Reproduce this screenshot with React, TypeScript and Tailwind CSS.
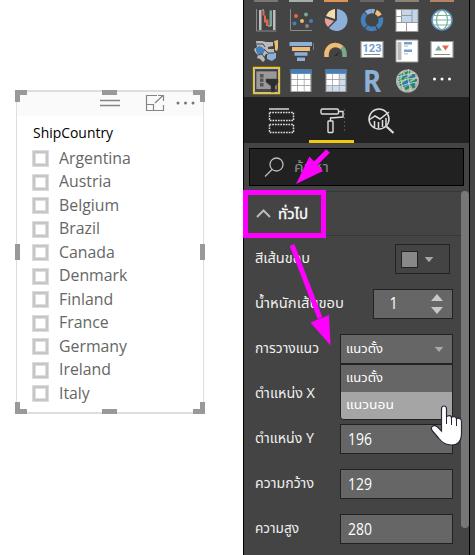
import React from "react";

const thai = "font-['Noto_Sans_Thai','Noto_Sans','Open_Sans',sans-serif]";
const latin = "font-['Open_Sans','Noto_Sans',sans-serif]";

const countries = [
  "Argentina", "Austria", "Belgium", "Brazil", "Canada", "Denmark",
  "Finland", "France", "Germany", "Ireland", "Italy",
];

function Handle({ className }: { className: string }) {
  return <span className={`absolute border-[#999] ${className}`} />;
}

function Slicer() {
  return (
    <section className={`relative ml-4 mt-[90px] h-[324px] w-[188px] shrink-0 border border-t-2 border-b-2 border-[#dedede] bg-white ${latin}`}>
      <header className="flex h-6 items-start bg-[#fafafa] pl-[83px] pt-[2px]">
        <svg width="96" height="20" viewBox="0 0 96 20" fill="none" stroke="#858585">
          <path d="M0 6.500h20M0 11.500h20" strokeWidth="1.300" />
          <path d="M57 1.500H46.500v15h17V11M46.500 10.500h7v6M55 9l8-7.500M58 1.500h5.500V7" strokeWidth="1.200" />
          <g fill="#777" stroke="none"><circle cx="78" cy="9" r="1.500" /><circle cx="85.500" cy="9" r="1.500" /><circle cx="93" cy="9" r="1.500" /></g>
        </svg>
      </header>
      <h2 className="ml-[16px] mt-[6px] h-[25px] w-fit origin-left scale-x-[0.960] text-[14.500px] leading-[22px] text-black">ShipCountry</h2>
      <ul className="ml-[15px]">
        {countries.map((c) => (
          <li key={c} className="flex h-[23.500px] items-center">
            <span className="size-[17px] shrink-0 border border-[#dcdcdc] bg-[#c6c6c6] p-[2px]">
              <span className="block size-full border border-[#dedede] bg-white" />
            </span>
            <span className="-mt-[2px] ml-[10px] origin-left scale-x-[0.960] text-[16.500px] leading-[22px] text-[#666]">{c}</span>
          </li>
        ))}
      </ul>
      <Handle className="-left-[2px] -top-[2px] size-3 border-l-[5px] border-t-[5px]" />
      <Handle className="-right-[2px] -top-[2px] size-3 border-r-[5px] border-t-[5px]" />
      <Handle className="-bottom-[2px] -left-[2px] size-3 border-b-[5px] border-l-[5px]" />
      <Handle className="-bottom-[2px] -right-[2px] size-3 border-b-[5px] border-r-[5px]" />
      <Handle className="-top-[2px] left-[85px] w-[15px] border-t-[5px]" />
      <Handle className="-bottom-[2px] left-[85px] w-[15px] border-t-[5px]" />
      <Handle className="-left-[2px] top-[152px] h-[16px] border-l-[5px]" />
      <Handle className="-right-[2px] top-[152px] h-[16px] border-l-[5px]" />
    </section>
  );
}

function Tile({ children }: { children: React.ReactNode }) {
  return <svg width="24" height="24" viewBox="0 0 24 24" className="shrink-0 overflow-visible">{children}</svg>;
}

function TableTile({ matrix }: { matrix?: boolean }) {
  return (
    <Tile>
      <path d="M1.500 1.500h21v22.500h-21z" fill="#999" />
      <path d="M1.500 1.500h21v4h-21z" fill="#4480bd" />
      {[6, 12, 18].map((y) => [2.5, 9, 15.5].map((x) => (
        <rect key={`${x}-${y}`} x={x} y={y} width="5.800" height="5.200" fill={matrix && (x > 15 || y > 17) ? "#cedded" : "#fff"} />
      )))}
    </Tile>
  );
}

function Visuals() {
  const row = "flex h-6 gap-[11.200px]";
  return (
    <div className="flex h-[98px] flex-col border-b border-[#222] pl-[10px]">
      <div className="flex h-[2px] gap-[11.200px]">
        {["bg-[#777]", "bg-[#a5b1a6]", "bg-[#dc9557]", "bg-[#666]", "bg-[#8b8372]", "bg-[#b28461]"].map((c) => (
          <span key={c} className={`w-6 ${c}`} />
        ))}
      </div>
      <div className={`mt-[6px] ${row}`}>
        <Tile>
          <path d="M2.500 1v22h20" fill="none" stroke="#8a8a8a" />
          <path d="M5 2h2.500v20H5zM19 2h2.500v20H19z" fill="#bdbdbd" />
          <path d="M8.500 2.500h2v5h-2zM10 7.500h2v7h-2zM12 11.500h2.500v6.500H12z" fill="#df6950" />
          <path d="M15.500 2.500H18V18h-2.500z" fill="#78a998" /><path d="M8 2h2M14 18h3" stroke="#bdbdbd" />
        </Tile>
        <Tile>
          <path d="M1.500 1v21.500H23" fill="none" stroke="#8a8a8a" />
          <g><circle cx="7" cy="8" r="2" fill="#df6950" /><circle cx="17" cy="6.500" r="2" fill="#77a98d" /><circle cx="5.500" cy="15.500" r="2" fill="#4480bd" /><circle cx="13" cy="13" r="2" fill="#e7bd74" /><circle cx="22" cy="13" r="2" fill="#4480bd" /><circle cx="18" cy="18" r="2" fill="#858585" /></g>
        </Tile>
        <Tile>
          <path d="M13 12V1a11 11 0 1 1-8 19z" fill="#8db0d8" />
          <path d="M11 11V1A11 11 0 0 0 2 8z" fill="#f2ddaf" /><path d="M10 13 1 10a10.500 10.500 0 0 0 3 9z" fill="#e9a298" />
        </Tile>
        <Tile>
          <g transform="rotate(-90 12 12)" fill="none" strokeWidth="4.500">
            <circle cx="12" cy="12" r="9" stroke="#eebd75" strokeDasharray="5.500 60" strokeDashoffset="-4" />
            <circle cx="12" cy="12" r="9" stroke="#4480bd" strokeDasharray="11 60" strokeDashoffset="-11.500" />
            <circle cx="12" cy="12" r="9" stroke="#4480bd" strokeDasharray="10 60" strokeDashoffset="-24" />
            <circle cx="12" cy="12" r="9" stroke="#4480bd" strokeDasharray="14 60" strokeDashoffset="-35" />
            <circle cx="12" cy="12" r="9" stroke="#8db0d8" strokeDasharray="6 60" strokeDashoffset="-50" />
            <circle cx="12" cy="12" r="9" stroke="#8db0d8" strokeDasharray="2.500 60" />
          </g>
        </Tile>
        <Tile>
          <path d="M.500 1h23v23H.500z" fill="#999" />
          <path d="M1.500 2h4.500v6H1.500zM1.500 9h4.500v5H1.500zM1.500 15h9.500v8H1.500zM12 15h10.500v8H12z" fill="#fff" />
          <path d="M7 2h9.500v5H7zM7 8h9.500v6H7zM17.500 2H22.500v12h-5z" fill="#c1d6eb" />
        </Tile>
        <Tile>
          <circle cx="12" cy="12" r="10" fill="#fff" stroke="#5c91c6" strokeWidth="1.500" />
          <g fill="none" stroke="#7caf9b" strokeWidth="1.200"><ellipse cx="12" cy="12" rx="5.500" ry="9.500" /><path d="M3 7.500h18M2 12h20M3 17h18" /></g>
        </Tile>
      </div>
      <div className={`mt-[6px] ${row}`}>
        <Tile>
          <path d="M2 3h6l4 1h7v4l-5 1v2h6v4l-8 1-2 3 1 3-2 2-3-3-3-1 1-3-3-3-1-3 3-2z" fill="#b9b9b9" />
          <path d="m2 10 3-2 3 1 3 3-2 4H4l-2-3z" fill="#4480bd" />
          <path d="m13 17 4-3 5 1v5l-4 3-5-2z" fill="#8db0d8" />
          <path d="m20 3 4-1v8l-1 3-2-1v-4z" fill="#eebd75" />
          <path d="M3 6h6l2 3M10 11l4 4h6M4 17l4-1 2 3" stroke="#444" fill="none" />
        </Tile>
        <Tile>
          <path d="M.500 4h22.500v4H.500z" fill="#8db0d8" /><path d="M3 9h18v4H3z" fill="#eebd75" />
          <path d="M5.500 14.300h13v3.500h-13zM8 19.500h8V23H8z" fill="#8db0d8" /><path d="M24.500 5v7" stroke="#777" />
        </Tile>
        <Tile>
          <path d="M2.500 19v-3a9 9 0 0 1 9-9c2.500 0 4.500 1 6.500 2.500" fill="none" stroke="#eebd75" strokeWidth="4.500" />
          <path d="M18 9.500c2 2 2.500 4 2.500 6.500v3" fill="none" stroke="#77a98d" strokeWidth="4.500" />
          <path d="m10 18 6-5-3 5z" fill="#292929" />
        </Tile>
        <Tile>
          <path d="M1 3.500h22v16H1z" fill="#fff" stroke="#999" strokeWidth="1.200" />
          <text x="2.500" y="14" textLength="19" lengthAdjust="spacingAndGlyphs" className="font-['Roboto',sans-serif] text-[11px] font-bold" fill="#709dce">123</text>
          <path d="M4 16.500h16" stroke="#888" />
        </Tile>
        <Tile>
          <path d="M1 2h22v22H1z" fill="#fff" stroke="#999" />
          <path d="M2.500 4h4v18h-4z" fill="#b8b8b8" />
          <path d="M9 4h8v2.500H9zM9 11.500h8V14H9z" fill="#75a1ce" /><path d="M9 7.500h4V9H9zM9 15h4v1.500H9z" fill="#ccc" />
        </Tile>
        <Tile>
          <path d="M1 3.500h22v16H1z" fill="#fff" stroke="#999" strokeWidth="1.200" />
          <path d="m5 12.500 3.500-5 3.500 5z" fill="#77a998" /><path d="m12 7.500 3.500 5 3.500-5z" fill="#df6950" /><path d="M4 16.500h16" stroke="#888" />
        </Tile>
      </div>
      <div className={`mt-[6px] ${row}`}>
        <Tile>
          <path d="M-.500-.500h26v26h-26z" fill="#484848" stroke="#f2c811" strokeWidth="1.300" />
          <path d="M.500.500h24v24H.500z" fill="none" stroke="#e8e8e8" strokeWidth=".7" />
          <path d="M2 3h21v18.500H2z" fill="#999" stroke="#333" strokeWidth=".6" />
          <path d="M6 6h3.500v3.500H6zM6 10.500h3.500V14H6zM6 15h3.500v3.500H6z" fill="#555" />
          <path d="M12 11h12v4l-3 3v6h-4v-6l-5-4z" fill="#2d2d2d" stroke="#444" strokeWidth=".6" />
        </Tile>
        <TableTile /><TableTile matrix />
        <Tile><text x="3" y="24" textLength="18" lengthAdjust="spacingAndGlyphs" className="font-['Noto_Sans',sans-serif] text-[31px] font-bold" fill="#8db0d8">R</text></Tile>
        <Tile>
          <circle cx="12.500" cy="13" r="11.500" fill="#b2b2b2" />
          <path d="m4 9 4-3m2 0 5-2m2 3 3 1M4 14l5-4m2 2 7-3m2 3 2 0M5 18l7-4m3 2 6-3M10 21l5-3m2 1 3-1" stroke="#179343" strokeWidth="3" />
          <path d="m8 9 5-2m-4 8 6-3m-8 6 7-3m2-6 4-1m-4 9 4-1" stroke="#227bb8" strokeWidth="2.500" />
          <path d="M2 9c7-1 13-4 18-4M2 14c7-2 13-4 21-4M4 19c6-3 12-4 18-5M7 3c-2 6-1 13 2 20M14 1c-2 7-1 14 2 22" stroke="#dedede" fill="none" strokeWidth=".8" />
        </Tile>
        <Tile><g fill="#fff"><circle cx="4.500" cy="11" r="1.500" /><circle cx="12" cy="11" r="1.500" /><circle cx="19.500" cy="11" r="1.500" /></g></Tile>
      </div>
    </div>
  );
}

function Tabs() {
  return (
    <nav className="flex h-[45px] bg-[#222] pl-[15px]">
      <button className="flex w-[50px] justify-center pt-[9px]">
        <svg width="28" height="28" viewBox="0 0 28 28" fill="none" stroke="#dedede" className="mr-[5px]">
          <path d="M1 2h20" stroke="#aaa" strokeWidth="2" />
          <path d="M1.500 5.500h24v8h-24zM1.500 17.500h24v8h-24z" strokeWidth="1.500" strokeDasharray="1.700 1" />
        </svg>
      </button>
      <button className="flex w-[45px] justify-center border-b-[3px] border-[#f2c811] pt-[9px]">
        <svg width="28" height="28" viewBox="0 0 28 28" fill="none" stroke="#ddd" strokeWidth="1.400">
          <rect x="3" y="2" width="17.500" height="5" rx="1.500" />
          <path d="M21 4.500h4v5.500l-12.500 1v3" /><rect x="10" y="14" width="5" height="11.500" rx=".7" />
          <path d="M26.500 2v24" stroke="#666" strokeWidth=".7" strokeDasharray="2 2" />
        </svg>
      </button>
      <button className="flex w-[54px] justify-center pt-[9px]">
        <svg width="28" height="28" viewBox="0 0 28 28" fill="none" stroke="#ddd" strokeWidth="1.500">
          <circle cx="12" cy="12" r="10" /><path d="m19.500 19.500 7 6.500" strokeWidth="2.200" />
          <path d="m2 13 6-4 5 3 9-7M7.500 20v-6M11.500 21v-6M15.500 20v-7M19 19v-8" />
        </svg>
      </button>
    </nav>
  );
}

function Caret({ up }: { up?: boolean }) {
  return <svg width="12" height="7" viewBox="0 0 12 7"><path d={up ? "M0 7 6 0l6 7z" : "m0 0 6 7 6-7z"} fill="#c7c7c7" /></svg>;
}

function Row({ label, width, children }: { label: string; width: number; children: React.ReactNode }) {
  return (
    <div className="flex h-[45px] items-center justify-between">
      <svg width={width} height="30" className="shrink-0 overflow-visible">
        <text x="0" y="19" textLength={width} lengthAdjust="spacingAndGlyphs" fill="#f0f0f0" className={`text-[14px] ${thai}`}>{label}</text>
      </svg>
      {children}
    </div>
  );
}

function NumberBox({ value }: { value: string }) {
  return <div className={`flex h-[30px] w-[113px] items-center border border-[#222] bg-[#666] pb-px pl-[7px] text-[15.500px] leading-5 text-white ${latin}`}><span className="origin-left scale-x-[0.900]">{value}</span></div>;
}

function Panel() {
  return (
    <aside className="relative flex h-[555px] w-[227px] shrink-0 flex-col border-x border-black bg-[#444]">
      <Visuals />
      <Tabs />
      <div className="ml-[5px] mt-[5px] flex h-[38px] w-[215px] shrink-0 items-center border border-black bg-[#212121] pl-[14px]">
        <svg width="20" height="21" viewBox="0 0 20 21" fill="none" stroke="#bbb" strokeWidth="1.300"><circle cx="12.500" cy="7.500" r="6.500" /><path d="m8 12.500-7 7" /></svg>
        <svg width="35" height="30" className="ml-[10px] overflow-visible"><text x="0" y="20" textLength="35" lengthAdjust="spacingAndGlyphs" fill="#888" className={`text-[14px] ${thai}`}>ค้นหา</text></svg>
      </div>
      <div className="mt-[5px] flex min-h-0 flex-1">
        <main className="w-[217px]">
          <div className="flex h-[45px] items-center border-y border-[#373737] pl-3">
            <svg width="15" height="9" viewBox="0 0 15 9" fill="none" stroke="#bbb" strokeWidth="2"><path d="m1 8 6.500-6.500L14 8" /></svg>
            <svg width="30" height="30" className="ml-[7px] overflow-visible"><text x="0" y="19.500" textLength="30" lengthAdjust="spacingAndGlyphs" fill="#fff" stroke="#fff" strokeWidth=".3" className={`text-[14px] ${thai}`}>ทั่วไป</text></svg>
          </div>
          <div className="pl-[11px] pr-2 pt-[0.500px]">
            <Row label="สีเส้นขอบ" width={55}>
              <div className="mr-[3px] flex h-[30px] w-[55px] items-center border border-[#222] pl-[5px]">
                <span className="size-[17px] border border-[#222] bg-[#888]" /><span className="ml-[5px] mt-px flex scale-x-75 scale-y-75 opacity-75"><Caret /></span>
              </div>
            </Row>
            <Row label="น้ำหนักเส้นขอบ" width={89}>
              <div className={`flex h-[30px] w-[80px] items-center justify-between border border-[#222] bg-[#666] pl-[15px] pr-[9px] text-[16px] text-white ${latin}`}>
                <span className="-mt-[3px] scale-x-90">1</span><span className="flex flex-col gap-[6px]"><Caret up /><Caret /></span>
              </div>
            </Row>
            <Row label="การวางแนว" width={64}>
              <div className="relative flex h-[30px] w-[113px] items-center justify-between border border-[#222] bg-[#666] pl-[5px] pr-[7px]">
                <svg width="37" height="28" className="overflow-visible"><text y="18" textLength="37" lengthAdjust="spacingAndGlyphs" fill="#fff" className={`text-[13px] ${thai}`}>แนวตั้ง</text></svg>
                <span className="flex scale-75 pt-px opacity-70"><Caret /></span>
                <div className="absolute -left-px top-[29px] z-10 w-[113px] overflow-hidden rounded-b border border-[#222] bg-[#666]">
                  {["แนวตั้ง", "แนวนอน"].map((x, i) => (
                    <div key={x} className={`flex h-[27px] items-center pl-[5px] ${i ? "bg-[#a5a5a5]" : "bg-[#666]"}`}>
                      <svg width={i ? 48 : 37} height="27" className="overflow-visible"><text y="17" textLength={i ? 48 : 37} lengthAdjust="spacingAndGlyphs" fill="#fff" className={`text-[13px] ${thai}`}>{x}</text></svg>
                    </div>
                  ))}
                </div>
              </div>
            </Row>
            <Row label="ตำแหน่ง X" width={60}><NumberBox value="" /></Row>
            <Row label="ตำแหน่ง Y" width={59}><NumberBox value="196" /></Row>
            <Row label="ความกว้าง" width={59}><NumberBox value="129" /></Row>
            <Row label="ความสูง" width={44}><NumberBox value="280" /></Row>
          </div>
        </main>
        <div className="h-[337px] w-2 rounded-full bg-[#777]" />
      </div>
    </aside>
  );
}

export default function App() {
  return (
    <div className="relative flex h-[555px] w-[475px] overflow-hidden bg-white">
      <Slicer />
      <div className="w-[39px] shrink-0" />
      <Panel />
      <div className="flex-1 bg-[#444]" />
      <svg className="absolute inset-0 z-20" width="475" height="555" viewBox="0 0 475 555">
        <path d="M245.500 192.500h78v43h-78z" fill="none" stroke="#f0f" strokeWidth="5" />
        <g fill="#f0f" stroke="#f0f"><path d="m328 151-14 14M292 245l28 73" strokeWidth="5" /><path d="m296 184 13.500-27.500 13.500 14.500zM330.500 345.500l-20-23L329 315z" stroke="none" /></g>
        <path d="M441.500 409c0-4 5-4 5 0v8c1-2 5-2 5 .5 1-1.500 5-1 5 1.500 1-1.500 5-1 5 2v12c0 8-4 12-10 12-6 0-10-3-13-7l-6-7c-3-4 1-7 5-4l4 4z" fill="#fff" stroke="#29283b" strokeWidth="1.200" />
        <path d="M446.500 416v8m5-7v8m5-6v7" stroke="#29283b" />
      </svg>
    </div>
  );
}
